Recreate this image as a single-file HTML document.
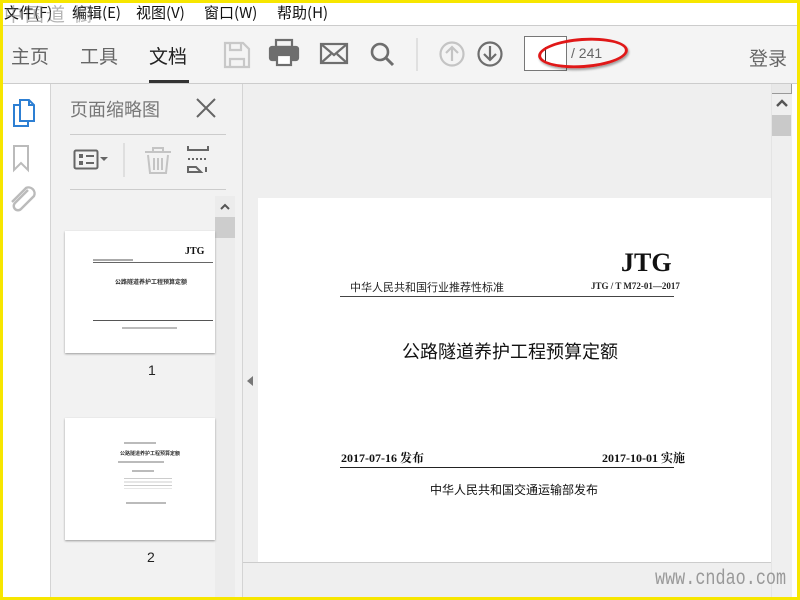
<!DOCTYPE html><html><head><meta charset="utf-8"><style>
*{margin:0;padding:0;box-sizing:border-box}
body{width:800px;height:600px;overflow:hidden;background:#f7e600;position:relative;font-family:"Liberation Sans","Noto Sans CJK SC",sans-serif}
.a{position:absolute}
.cn{font-family:"Noto Sans CJK SC","Liberation Sans",sans-serif}
.ser{font-family:"Liberation Serif","Noto Serif CJK SC",serif;font-weight:bold}
</style></head><body>
<div class="a" style="left:3px;top:3px;width:794px;height:594px;background:#fff"></div>
<!-- menu -->
<div class="a cn" style="left:4px;top:3px;height:20px;font-size:15px;color:#111;line-height:20px;white-space:nowrap">
<span class="a" style="left:0">文件(F)</span><span class="a" style="left:68px">编辑(E)</span><span class="a" style="left:132px">视图(V)</span><span class="a" style="left:200px">窗口(W)</span><span class="a" style="left:273px">帮助(H)</span></div>
<div class="a cn" style="left:4px;top:0;font-size:19px;color:rgba(120,120,120,.55);letter-spacing:2px">中国道 橱</div>
<div class="a" style="left:3px;top:25px;width:794px;height:1px;background:#ccc"></div>
<!-- toolbar -->
<div class="a" style="left:3px;top:26px;width:794px;height:57px;background:#f4f4f4"></div>
<div class="a" style="left:3px;top:83px;width:794px;height:1px;background:#ccc"></div>
<div class="a cn" style="left:11px;top:42px;font-size:19px;color:#666">主页</div>
<div class="a cn" style="left:80px;top:42px;font-size:19px;color:#666">工具</div>
<div class="a cn" style="left:149px;top:42px;font-size:19px;color:#222">文档</div>
<div class="a" style="left:149px;top:80px;width:40px;height:3px;background:#333"></div>
<div class="a cn" style="left:749px;top:44px;font-size:19px;color:#666">登录</div>
<svg class="a" style="left:220px;top:38px" width="560" height="34" viewBox="220 38 560 34">
<g fill="none" stroke-width="2.2">
<path d="M225 43h18l6 6v18h-24z M230 43v7h11v-7 M230 67v-8h14v8" stroke="#c8c8c8"/>
<rect x="270" y="47" width="28" height="13" rx="2" fill="#6e6e6e" stroke="#6e6e6e"/>
<rect x="276" y="40" width="16" height="7" fill="none" stroke="#6e6e6e"/>
<rect x="277" y="55" width="14" height="10" fill="#fff" stroke="#6e6e6e"/>
<rect x="321" y="44" width="26" height="19" stroke="#6e6e6e"/>
<path d="M321 44l13 11 13-11 M321 63l10-9 M347 63l-10-9" stroke="#6e6e6e"/>
<circle cx="380" cy="52" r="8" stroke="#6e6e6e" stroke-width="2.6"/>
<path d="M386 58l7 7" stroke="#6e6e6e" stroke-width="3"/>
<path d="M417 38v33" stroke="#ccc" stroke-width="1"/>
<circle cx="452" cy="54" r="11.5" stroke="#c4c4c4"/>
<path d="M452 61v-13 M446 53l6-6 6 6" stroke="#c4c4c4"/>
<circle cx="490" cy="54" r="11.5" stroke="#6e6e6e"/>
<path d="M490 46v13 M484 54l6 6 6-6" stroke="#6e6e6e"/>
</g></svg>
<div class="a" style="left:524px;top:36px;width:43px;height:35px;border:1px solid #777;background:#fff"></div>
<div class="a" style="left:545px;top:47px;width:1px;height:14px;background:#333"></div>
<div class="a" style="left:571px;top:45px;font-size:14px;color:#666">/ 241</div>
<div class="a" style="left:538px;top:38px;width:90px;height:30px;border:3px solid #e01818;border-radius:50%;transform:rotate(-4deg);box-shadow:1px 2px 2px rgba(0,0,0,.35)"></div>
<!-- left rail -->
<div class="a" style="left:3px;top:84px;width:47px;height:513px;background:#fff"></div>
<div class="a" style="left:50px;top:84px;width:1px;height:513px;background:#d4d4d4"></div>
<svg class="a" style="left:3px;top:84px" width="48" height="140" viewBox="3 84 48 140">
<g fill="none" stroke-width="2">
<path d="M19 105h-5v21h14v-5" stroke="#2d7fd3"/>
<path d="M20 100h9l5 5v16h-14z M29 100v5h5" stroke="#2d7fd3"/>
<path d="M14 146h14v24l-7-7-7 7z" stroke="#bbb"/>
<path d="M28 190l-13 13a4 4 0 0 0 6 6l13-13a6 6 0 0 0-8-8l-14 14" stroke="#bbb" stroke-width="2.4"/>
</g></svg>
<!-- panel -->
<div class="a" style="left:51px;top:84px;width:191px;height:513px;background:#f2f2f2"></div>
<div class="a" style="left:242px;top:84px;width:1px;height:513px;background:#d4d4d4"></div>
<div class="a cn" style="left:70px;top:96px;font-size:18px;color:#777">页面缩略图</div>
<svg class="a" style="left:195px;top:97px" width="22" height="22"><path d="M2 2l18 18M20 2L2 20" stroke="#666" stroke-width="2"/></svg>
<div class="a" style="left:70px;top:134px;width:156px;height:1px;background:#ccc"></div>
<svg class="a" style="left:70px;top:140px" width="150" height="45" viewBox="70 140 150 45">
<rect x="74.5" y="150.5" width="23" height="18" rx="1.5" fill="none" stroke="#666" stroke-width="2"/>
<rect x="79" y="154" width="4" height="4" fill="#666"/><rect x="79" y="161" width="4" height="4" fill="#666"/>
<path d="M86 156h8M86 163h8" stroke="#666" stroke-width="2"/>
<path d="M100 157h8l-4 4z" fill="#666"/>
<path d="M124 143v34" stroke="#ccc"/>
<g stroke="#c4c4c4" stroke-width="2" fill="none"><path d="M145 152h26M153 152v-4h10v4M148 155l2 18h16l2-18M154 158v12M158 158v12M162 158v12"/></g>
<g stroke="#666" stroke-width="2" fill="none"><path d="M188 146v4h20v-4M188 172v-5h8l5 5z M206 167v5"/><path d="M188 159h20" stroke-dasharray="2 2"/></g>
</svg>
<div class="a" style="left:70px;top:189px;width:156px;height:1px;background:#ccc"></div>
<div class="a" style="left:215px;top:196px;width:20px;height:401px;background:#ececec"></div>
<svg class="a" style="left:215px;top:196px" width="20" height="20"><path d="M6 13l4-4 4 4" stroke="#555" stroke-width="2" fill="none"/></svg>
<div class="a" style="left:215px;top:217px;width:20px;height:21px;background:#cdcdcd"></div>
<!-- thumb1 -->
<div class="a" style="left:65px;top:231px;width:150px;height:122px;background:#fff;box-shadow:0 1px 2px #999"></div>
<div class="a ser" style="left:185px;top:246px;font-size:10px;color:#111">JTG</div>
<div class="a" style="left:93px;top:262px;width:120px;height:1px;background:#666"></div>
<div class="a" style="left:93px;top:259px;width:40px;height:2px;background:#aaa"></div>
<div class="a cn" style="left:115px;top:277px;font-size:6px;color:#333;font-weight:bold">公路隧道养护工程预算定额</div>
<div class="a" style="left:93px;top:320px;width:120px;height:1px;background:#555"></div>
<div class="a" style="left:122px;top:327px;width:55px;height:2px;background:#bbb"></div>
<div class="a" style="left:148px;top:362px;font-size:14px;color:#222">1</div>
<!-- thumb2 -->
<div class="a" style="left:65px;top:418px;width:150px;height:122px;background:#fff;box-shadow:0 1px 2px #999"></div>
<div class="a" style="left:124px;top:442px;width:32px;height:2px;background:#bbb"></div>
<div class="a cn" style="left:120px;top:450px;font-size:5px;color:#333;font-weight:bold">公路隧道养护工程预算定额</div>
<div class="a" style="left:118px;top:461px;width:46px;height:2px;background:#bbb"></div>
<div class="a" style="left:132px;top:470px;width:22px;height:2px;background:#bbb"></div>
<div class="a" style="left:124px;top:478px;width:48px;height:11px;background:repeating-linear-gradient(#ccc 0 1px,#fff 1px 3.5px)"></div>
<div class="a" style="left:126px;top:502px;width:40px;height:2px;background:#bbb"></div>
<div class="a" style="left:147px;top:549px;font-size:14px;color:#222">2</div>
<!-- doc area -->
<div class="a" style="left:243px;top:84px;width:528px;height:513px;background:#efefef"></div>
<svg class="a" style="left:245px;top:375px" width="10" height="12"><path d="M8 1L2 6l6 5z" fill="#777"/></svg>
<div class="a" style="left:258px;top:198px;width:513px;height:364px;background:#fff"></div>
<div class="a" style="left:243px;top:562px;width:528px;height:1px;background:#ccc"></div>
<div class="a ser" style="left:621px;top:248px;font-size:26px;color:#111">JTG</div>
<div class="a cn" style="left:350px;top:279px;font-size:11px;color:#222">中华人民共和国行业推荐性标准</div>
<div class="a ser" style="left:591px;top:281px;font-size:9px;color:#222">JTG / T M72-01—2017</div>
<div class="a" style="left:340px;top:296px;width:334px;height:1px;background:#444"></div>
<div class="a cn" style="left:402px;top:338px;font-size:18px;color:#111">公路隧道养护工程预算定额</div>
<div class="a ser cn" style="left:341px;top:449px;font-size:12px;color:#111;font-weight:bold">2017-07-16 发布</div>
<div class="a ser cn" style="left:602px;top:449px;font-size:12px;color:#111;font-weight:bold">2017-10-01 实施</div>
<div class="a" style="left:340px;top:467px;width:334px;height:1px;background:#222"></div>
<div class="a cn" style="left:430px;top:481px;font-size:12px;color:#111">中华人民共和国交通运输部发布</div>
<!-- right scrollbar -->
<div class="a" style="left:771px;top:84px;width:21px;height:513px;background:#efefef;border-left:1px solid #e4e4e4"></div>
<div class="a" style="left:772px;top:84px;width:20px;height:10px;background:#e8e8e8;border-right:1px solid #999;border-bottom:1px solid #999"></div>
<svg class="a" style="left:772px;top:97px" width="20" height="14"><path d="M5 9l5-5 5 5" stroke="#555" stroke-width="2.4" fill="none"/></svg>
<div class="a" style="left:772px;top:115px;width:19px;height:21px;background:#c9c9c9"></div>
<div class="a" style="left:792px;top:84px;width:5px;height:513px;background:#fff"></div>
<div class="a" style="left:655px;top:568px;font-family:'Liberation Mono',monospace;font-size:21px;color:#999;white-space:nowrap;transform:scaleX(.8);transform-origin:left">www.cndao.com</div>
</body></html>
